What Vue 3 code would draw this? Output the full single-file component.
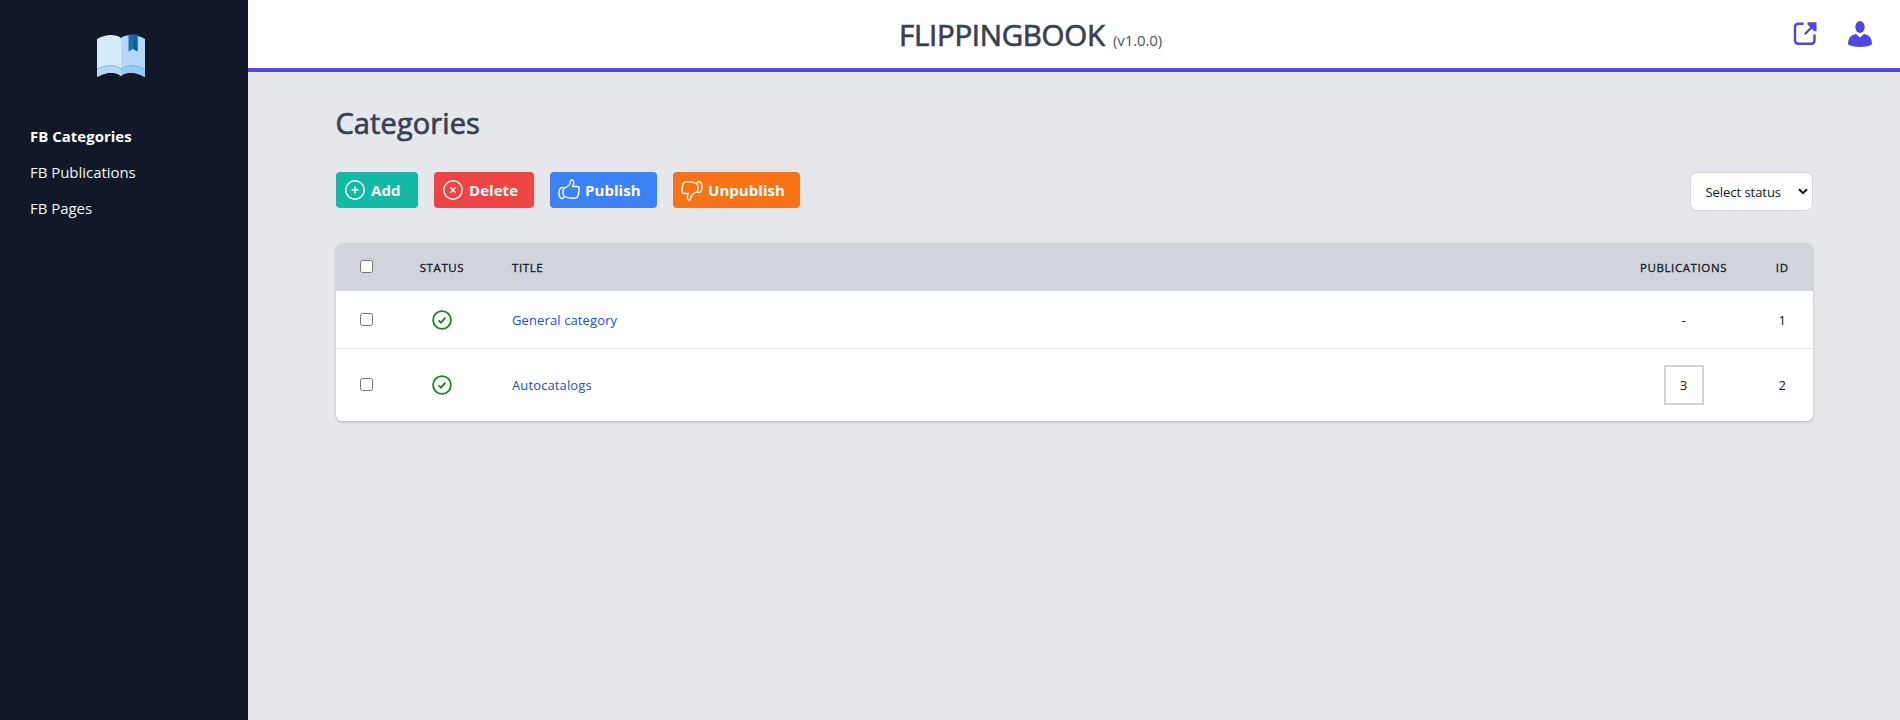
<script setup>
const links = [
  { label: 'FB Categories', key: 'cat', active: true },
  { label: 'FB Publications', key: 'pub' },
  { label: 'FB Pages', key: 'pages' },
]
const rows = [
  { id: 1, title: 'General category', key: 'general', count: 0 },
  { id: 2, title: 'Autocatalogs', key: 'auto', count: 3 },
]
</script>

<template>
  <div class="app">
    <aside class="sidebar">
      <svg class="logo" viewBox="0 0 48 44">
        <path d="M0 5C8 .5 18-.5 24 4v38c-6-5-15-4-24 1z" fill="#d6eafc" />
        <path d="M24 4C30-.5 40 .5 48 5v38c-9-5-18-6-24-1z" fill="#b3d9f7" />
        <path d="M0 35c9-4 18-5 24 0v7c-6-5-15-4-24 1z" fill="#b3d9f7" />
        <path d="M24 35c6-5 15-4 24 0v8c-9-5-18-6-24-1z" fill="#97cbf2" />
        <path d="M0 35c9-4 18-5 24 0 6-5 15-4 24 0" fill="none" stroke="#7ba7cf" stroke-width=".8" />
        <path d="M31.500 .5h9v17l-4.500-2.500-4.500 2.500z" fill="#1a6fb5" />
        <path d="M36.500 .5h4v17l-4-2.300z" fill="#155b98" />
      </svg>
      <nav class="nav">
        <a v-for="l in links" :key="l.key" :class="['nav-link', l.key, { active: l.active }]">{{ l.label }}</a>
      </nav>
    </aside>
    <div class="page">
      <header class="topbar">
        <div class="brand"><span class="name">FLIPPINGBOOK</span><span class="version">(v1.0.0)</span></div>
        <div class="tools">
          <svg class="external" viewBox="0 0 24 24" fill="none" stroke="#4f46e5" stroke-width="2.400">
            <path d="M9.500 2.700H5a3 3 0 0 0-3 3v14a3 3 0 0 0 3 3h13.500a3 3 0 0 0 3-3V14.500" stroke-linecap="round" />
            <path d="M12.500 12.500 21 4" stroke-linecap="round" />
            <path d="M14.500 1.200h9v9h-2.200l-6.800-6.800z" fill="#4f46e5" stroke="none" />
          </svg>
          <svg class="user" viewBox="0 0 24 26" fill="#4f46e5">
            <ellipse cx="12" cy="6" rx="4.700" ry="6" />
            <path d="M8 13 12 16.500 16 13c5 .8 8 4 8 10.500-5 3.300-19 3.300-24 0C0 17 3 13.800 8 13z" />
          </svg>
        </div>
      </header>
      <main class="content">
        <h1 class="heading">Categories</h1>
        <div class="toolbar">
          <div class="actions">
            <button class="btn add">
              <svg viewBox="0 0 20 20"><circle cx="10" cy="10" r="9.200" /><path d="M10 6.500v7M6.500 10h7" /></svg><span>Add</span>
            </button>
            <button class="btn delete">
              <svg viewBox="0 0 20 20"><circle cx="10" cy="10" r="9.200" /><path d="m7.300 7.300 5.400 5.400M12.700 7.300l-5.400 5.400" /></svg><span>Delete</span>
            </button>
            <button class="btn publish">
              <svg class="thumb" viewBox="0 0 22 22"><path d="M6 9c3-.5 5.500-3 6-5 .3-1.500.2-3 1.700-3 2.600 0 2.300 3.500 1 6.500H19c2 0 2.500 1.500 1.800 3 .5 1 .4 2-.2 3 .3 1 0 2-.6 2.600 0 2-1 3-3 3-4 .4-7 .2-10.500-1.600M6 9C3.500 7.500 1.300 9 1 13.500c-.2 4 1.500 6.500 3.500 6l2-2C4.500 16 4.500 11.500 6 9z" /></svg><span>Publish</span>
            </button>
            <button class="btn unpublish">
              <svg class="thumb" viewBox="0 0 22 22"><path d="M16 13c-3 .5-5.500 3-6 5-.3 1.500-.2 3-1.700 3-2.600 0-2.300-3.500-1-6.500H3c-2 0-2.500-1.500-1.800-3-.5-1-.4-2 .2-3-.3-1 0-2 .6-2.600 0-2 1-3 3-3 4-.4 7-.2 10.500 1.600M16 13c2.500 1.500 4.700 0 5-4.500.2-4-1.500-6.500-3.500-6l-2 2c2 1.500 2 6 .5 8.500z" /></svg><span>Unpublish</span>
            </button>
          </div>
          <div class="select"><span>Select status</span>
            <svg viewBox="0 0 10 7"><path d="m1 1.200 4 4 4-4" /></svg>
          </div>
        </div>
        <section class="table">
          <div class="row head">
            <div><i class="check"></i></div>
            <div class="h-status">STATUS</div>
            <div class="title h-title">TITLE</div>
            <div class="h-pubs">PUBLICATIONS</div>
            <div class="id h-id">ID</div>
          </div>
          <div v-for="r in rows" :key="r.id" :class="['row', r.key]">
            <div><i class="check"></i></div>
            <div><svg class="ok" viewBox="0 0 20 20"><circle cx="10" cy="10" r="8.900" /><path d="m6.600 10.300 2.400 2.400 4.400-5" /></svg></div>
            <div class="title"><a>{{ r.title }}</a></div>
            <div><span v-if="r.count" class="count">{{ r.count }}</span><span v-else>-</span></div>
            <div class="id">{{ r.id }}</div>
          </div>
        </section>
      </main>
    </div>
  </div>
</template>

<style>
body { margin: 0; }
</style>
<style scoped>
* { box-sizing: border-box; }
.app { display: flex; height: 720px; background: #e5e7eb; font-family: "Open Sans", "Noto Sans", sans-serif; color: #111827; overflow: hidden; }
.sidebar { width: 248px; background: #111827; display: flex; flex-direction: column; flex: none; }
.logo { width: 48px; height: 44px; margin: 34px 0 0 97px; }
.nav { display: flex; flex-direction: column; padding: 40px 0 0 30px; }
.nav-link { height: 36px; line-height: 36px; font-size: 15px; color: #f3f4f6; letter-spacing: -.04px; white-space: nowrap; }
.nav-link.active { font-weight: 700; color: #fff; letter-spacing: 0; }
.page { flex: 1; display: flex; flex-direction: column; }
.topbar { height: 72px; background: #fff; border-bottom: 4px solid #4f46e5; display: flex; justify-content: space-between; padding: 0 28px 0 651px; }
.brand { display: flex; align-items: baseline; color: #374151; white-space: nowrap; line-height: 70px; }
.name { font-size: 29.5px; letter-spacing: -.3px; width: 214px; -webkit-text-stroke: .7px #374151; }
.version { font-size: 15px; color: #4b5563; letter-spacing: -.1px; }
.tools { display: flex; gap: 31px; padding-top: 21px; }
.external { width: 24px; height: 24px; }
.user { width: 24px; height: 26px; }
.content { padding: 31px 87px 0 87.5px; }
.heading { margin: 0; font-size: 29px; font-weight: 400; line-height: 40px; color: #374151; letter-spacing: .1px; -webkit-text-stroke: .7px #374151; }
.toolbar { display: flex; justify-content: space-between; margin-top: 29px; }
.actions { display: flex; gap: 16px; }
.btn { height: 36px; border: 0; border-radius: 4px; color: #fff; font: 700 15px "Open Sans", "Noto Sans", sans-serif; display: flex; align-items: center; padding: 0 0 0 9.500px; gap: 6px; white-space: nowrap; letter-spacing: .05px; }
.btn svg { width: 20px; height: 20px; fill: none; stroke: #fff; stroke-width: 1.4; flex: none; }
.btn svg.thumb { width: 22px; height: 22px; margin: 0 -1px; }
.add { width: 82px; background: #14b8a6; }
.delete { width: 100px; background: #ef4444; }
.publish { width: 107px; background: #3b82f6; }
.unpublish { width: 127px; background: #f97316; }
.select { width: 123px; height: 39px; border: 1px solid #d1d5db; border-radius: 7px; background: #fff; font-size: 13px; display: flex; align-items: center; justify-content: space-between; padding: 1px 4px 0 15px; letter-spacing: -.05px; white-space: nowrap; margin-right: .5px; }
.select svg { width: 10px; height: 7px; fill: none; stroke: #111827; stroke-width: 2; margin-bottom: 2px; }
.table { margin-top: 32px; border-radius: 6px; overflow: hidden; background: #fff; box-shadow: 0 1px 3px rgba(0, 0, 0, .15), 0 1px 2px rgba(0, 0, 0, .08); }
.row { display: grid; grid-template-columns: 61px 91px 1115px 162px 1fr; align-items: center; text-align: center; font-size: 13px; }
.row > div { display: flex; align-items: center; justify-content: center; }
.row > .title { justify-content: flex-start; padding-left: 24.500px; }
.row > .id { padding-right: 13px; }
.head { height: 48px; background: #d1d5db; font-size: 11.5px; letter-spacing: .6px; -webkit-text-stroke: .3px #111827; }
.general { height: 58px; border-bottom: 1px solid #e5e7eb; }
.auto { height: 72px; }
.title a { color: #1d4ed8; letter-spacing: .12px; }
.check { width: 13px; height: 13px; background: #fff; border: 1px solid #767676; border-radius: 2.500px; }
.head .check, .auto .check { margin-bottom: 2px; }
.ok { width: 20px; height: 20px; fill: none; stroke: #15881c; stroke-width: 1.8; }
.count { width: 40px; height: 40px; line-height: 36px; border: 2px solid #d1d5db; }
</style>
